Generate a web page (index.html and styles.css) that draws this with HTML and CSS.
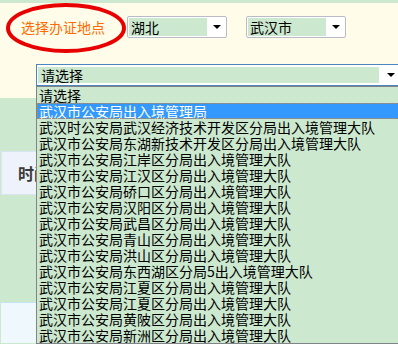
FILE: index.html
```html
<!DOCTYPE html>
<html lang="zh-CN">
<head>
  <meta charset="UTF-8" />
  <title>选择办证地点</title>
  <link rel="stylesheet" href="styles.css">
</head>
<body>
  <div class="page">
    <div class="panel">
      <div class="place-row">
        <span class="place-label">选择办证地点</span>
        <div class="select">
          <span class="select-value">湖北</span>
          <span class="select-arrow"></span>
        </div>
        <div class="select">
          <span class="select-value">武汉市</span>
          <span class="select-arrow"></span>
        </div>
      </div>
      <div class="select wide-select">
        <span class="select-value">请选择</span>
        <span class="select-arrow"></span>
      </div>
    </div>

    <div class="time-row">
      <span class="time-label">时间</span>
    </div>

    <div class="bottom-row"></div>
  </div>

  <svg class="mark" width="140" height="60" viewBox="0 0 140 60">
    <ellipse cx="66" cy="28" rx="58" ry="23" fill="none" stroke="#e80000" stroke-width="4" />
  </svg>

  <ul class="dropdown">
    <li>请选择</li>
    <li class="selected">武汉市公安局出入境管理局</li>
    <li>武汉时公安局武汉经济技术开发区分局出入境管理大队</li>
    <li>武汉市公安局东湖新技术开发区分局出入境管理大队</li>
    <li>武汉市公安局江岸区分局出入境管理大队</li>
    <li>武汉市公安局江汉区分局出入境管理大队</li>
    <li>武汉市公安局硚口区分局出入境管理大队</li>
    <li>武汉市公安局汉阳区分局出入境管理大队</li>
    <li>武汉市公安局武昌区分局出入境管理大队</li>
    <li>武汉市公安局青山区分局出入境管理大队</li>
    <li>武汉市公安局洪山区分局出入境管理大队</li>
    <li>武汉市公安局东西湖区分局5出入境管理大队</li>
    <li>武汉市公安局江夏区分局出入境管理大队</li>
    <li>武汉市公安局江夏区分局出入境管理大队</li>
    <li>武汉市公安局黄陂区分局出入境管理大队</li>
    <li>武汉市公安局新洲区分局出入境管理大队</li>
  </ul>
</body>
</html>
```

FILE: styles.css
```css
html, body {
  margin: 0;
  height: 100%;
  overflow: hidden;
}

body {
  background-color: #cce8cf;
  font-family: "Noto Sans CJK SC", "Liberation Sans", sans-serif;
  font-size: 14px;
  color: #000;
  position: relative;
}

.page {
  padding-top: 3px;
}

.panel {
  height: 95px;
  background-color: #fffde9;
  overflow: hidden;
}

.place-row {
  display: flex;
  align-items: center;
  margin-top: 13px;
  height: 22px;
}

.place-label {
  width: 106px;
  padding-left: 21px;
  color: #ff6a00;
  font-size: 14px;
  line-height: 22px;
}

.select {
  display: flex;
  align-items: center;
  box-sizing: border-box;
  width: 100px;
  height: 22px;
  padding: 1px;
  margin-right: 19px;
  background-color: #fff;
  border: 1px solid #b9bcc6;
  border-radius: 2px;
}

.select-value {
  width: 76px;
  height: 18px;
  padding-left: 2px;
  line-height: 18px;
  background-color: #cce8cf;
}

.select-arrow {
  width: 0;
  height: 0;
  margin-left: 6px;
  border-top: 4px solid #000;
  border-left: 4px solid transparent;
  border-right: 4px solid transparent;
}

.wide-select {
  width: 364px;
  margin: 26px 0 0 36px;
  padding: 2px 1px;
  border-color: #4d86bd;
  border-radius: 0;
}

.wide-select .select-value {
  width: 338px;
  height: 16px;
  padding-left: 3px;
  line-height: 16px;
}

.wide-select .select-arrow {
  margin-left: 8px;
}

.time-row {
  display: flex;
  align-items: center;
  box-sizing: border-box;
  height: 44px;
  margin: 53px 0 0 1px;
  padding-left: 16px;
  background-color: #eef3fb;
  border: 1px solid #dbe5f1;
}

.time-label {
  font-size: 16px;
  font-weight: bold;
  color: #3a3a3a;
}

.bottom-row {
  height: 40px;
  margin: 107px 0 0 1px;
  background-color: #eef8fd;
  border-top: 1px solid #c2e6ef;
}

.mark {
  position: absolute;
  left: 0;
  top: 0;
}

.dropdown {
  position: absolute;
  left: 36px;
  top: 86px;
  width: 372px;
  margin: 0;
  padding: 0;
  list-style: none;
  background-color: #cce8cf;
  border: 1px solid #808488;
}

.dropdown li {
  box-sizing: border-box;
  height: 16px;
  padding-left: 2px;
  line-height: 16px;
  white-space: nowrap;
}

.dropdown .selected {
  background-color: #3399ff;
  color: #fff;
  outline: 1px dotted #d9822b;
  outline-offset: -1px;
}
```
